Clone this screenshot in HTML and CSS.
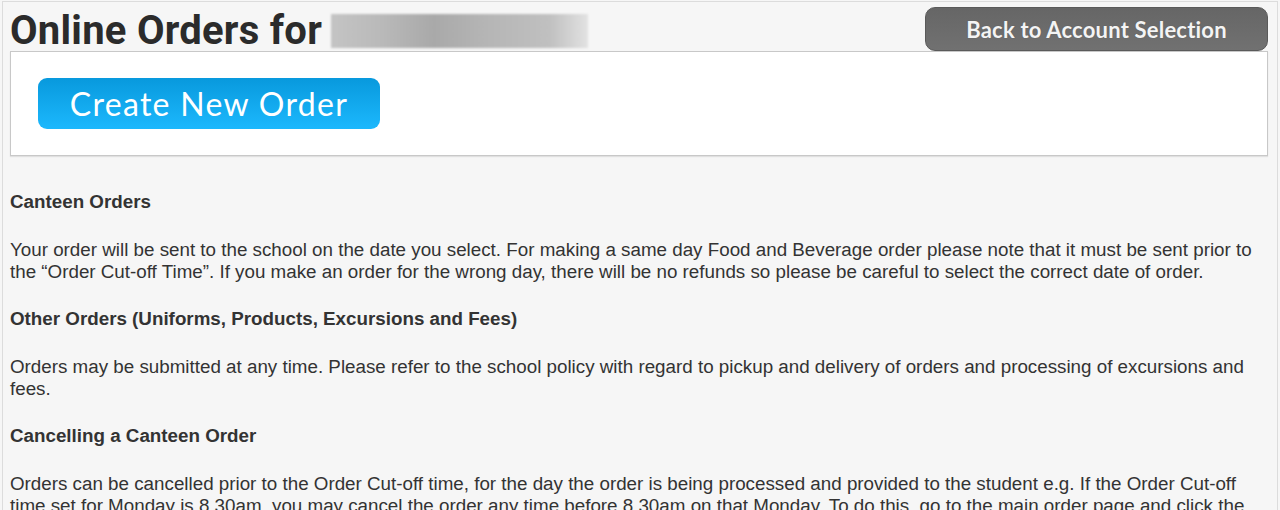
FILE: index.html
```html
<!DOCTYPE html>
<html>
<head>
  <link rel="stylesheet" href="styles.css">
</head>
<body>
  <div class="page">
    <div class="title-row">
      <h1>Online Orders for <span class="redacted"></span></h1>
      <button type="button" class="back-btn">Back to Account Selection</button>
    </div>

    <div class="order-box">
      <button type="button" class="create-btn">Create New Order</button>
    </div>

    <div class="info">
      <h3>Canteen Orders</h3>
      <p>Your order will be sent to the school on the date you select. For making a same day Food and Beverage order please note that it must be sent prior to the &ldquo;Order Cut-off Time&rdquo;. If you make an order for the wrong day, there will be no refunds so please be careful to select the correct date of order.</p>

      <h3>Other Orders (Uniforms, Products, Excursions and Fees)</h3>
      <p>Orders may be submitted at any time. Please refer to the school policy with regard to pickup and delivery of orders and processing of excursions and fees.</p>

      <h3>Cancelling a Canteen Order</h3>
      <p>Orders can be cancelled prior to the Order Cut-off time, for the day the order is being processed and provided to the student e.g. If the Order Cut-off time set for Monday is 8.30am, you may cancel the order any time before 8.30am on that Monday. To do this, go to the main order page and click the cancel button beside the order.</p>
    </div>
  </div>
</body>
</html>
```

FILE: styles.css
```css
/* Page frame */
html, body {
  margin: 0;
  padding: 0;
  background-color: #f6f6f6;
}

body {
  height: 510px;
  overflow: hidden;
}

.page {
  margin: 1px 2px 0 2px;
  border: 1px solid #dcdcdc;
  padding: 0 9px 0 7px;
  min-height: 600px;
  font-family: "Liberation Sans", Arial, sans-serif;
  color: #333;
}

/* Heading row */
.title-row {
  display: flex;
  justify-content: space-between;
  align-items: flex-start;
  height: 49px;
}

h1 {
  margin: 0;
  padding-top: 8px;
  font-family: Roboto, "Liberation Sans", sans-serif;
  font-size: 40px;
  font-weight: bold;
  line-height: 42px;
  letter-spacing: 0.25px;
  color: #2b2b2b;
  display: flex;
  align-items: center;
}

.redacted {
  display: inline-block;
  width: 257px;
  height: 34px;
  margin-left: 9px;
  background: linear-gradient(90deg, #c4c4c4 0%, #b9b9b9 20%, #a9a9a9 40%, #b5b5b5 60%, #c0c0c0 85%, #e2e2e2 100%);
  filter: blur(1px);
}

.back-btn {
  margin-top: 5px;
  width: 343px;
  height: 44px;
  border: 1px solid #5a5a5a;
  border-radius: 10px;
  background: linear-gradient(#666, #717171);
  color: #f4f4f4;
  font-family: Lato, "DejaVu Sans", sans-serif;
  font-size: 22px;
  font-weight: bold;
  letter-spacing: 0.2px;
  text-shadow: 0 0 1px #555;
  cursor: pointer;
}

/* White box with the create button */
.order-box {
  background-color: #fff;
  border: 1px solid #c8c8c8;
  box-shadow: 0 1px 1px #e0e0e0;
  height: 105px;
  padding: 26px 0 0 27px;
  box-sizing: border-box;
}

.create-btn {
  width: 342px;
  height: 51px;
  border: none;
  border-radius: 9px;
  background: linear-gradient(#0899dd, #1cb8fd);
  color: #fff;
  font-family: Lato, "DejaVu Sans", sans-serif;
  font-size: 32px;
  letter-spacing: 1.3px;
  cursor: pointer;
}

/* Information text */
.info {
  padding-top: 35px;
  font-size: 18.8px;
  line-height: 22px;
}

.info h3 {
  margin: 0 0 26px 0;
  font-size: 18.8px;
  line-height: 22px;
}

.info p {
  margin: 0 0 25px 0;
}
```
